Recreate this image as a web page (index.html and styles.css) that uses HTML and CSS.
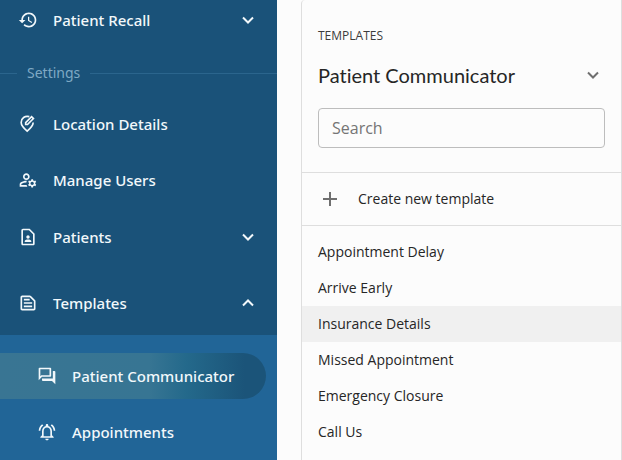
FILE: index.html
```html
<!DOCTYPE html>
<html lang="en">

<head>
    <meta charset="UTF-8">
    <meta name="viewport" content="width=device-width, initial-scale=1">
    <title>Templates</title>
    <link rel="stylesheet" href="styles.css">
</head>

<body>

    <div class="app">
        <nav class="sidebar">
            <button class="sidebar__item sidebar__item--top" type="button" aria-expanded="false">
                <svg class="icon" viewBox="0 0 24 24"><path d="M13 3c-4.97 0-9 4.03-9 9H1l3.89 3.89.07.14L9 12H6c0-3.87 3.13-7 7-7s7 3.13 7 7-3.13 7-7 7c-1.93 0-3.68-.79-4.94-2.06l-1.42 1.42C8.27 19.99 10.51 21 13 21c4.97 0 9-4.03 9-9s-4.03-9-9-9zm-1 5v5l4.28 2.54.72-1.21-3.5-2.08V8H12z"/></svg>
                <span class="sidebar__label">Patient Recall</span>
                <svg class="chevron" viewBox="0 0 24 24"><path d="M7 9.5l5 5 5-5"/></svg>
            </button>

            <div class="sidebar__divider">Settings</div>

            <a class="sidebar__item" href="#">
                <svg class="icon" viewBox="0 0 24 24">
                    <path class="icon__line" d="M13.6 3.2C8.4 1.6 3.8 5.2 3.8 10.2c0 3 2.3 6.2 7.2 10.4 4.9-4.2 7.2-7.4 7.2-10.4"/>
                    <path class="icon__line" d="M9.2 12.6V10.4l7.1-7.1 2.2 2.2-7.1 7.1z"/>
                </svg>
                <span class="sidebar__label">Location Details</span>
            </a>
            <a class="sidebar__item" href="#">
                <svg class="icon" viewBox="0 0 24 24"><path d="M4 18v-.65c0-.34.16-.66.41-.81C6.1 15.53 8.03 15 10 15c.03 0 .05 0 .08.01.1-.7.3-1.37.59-1.98-.22-.02-.44-.03-.67-.03-2.42 0-4.68.67-6.61 1.82-.88.52-1.39 1.5-1.39 2.53V20h9.26c-.42-.6-.75-1.28-.97-2H4zM10 12c2.21 0 4-1.79 4-4s-1.79-4-4-4C7.79 4 6 5.79 6 8s1.79 4 4 4zm0-6c1.1 0 2 .9 2 2s-.9 2-2 2-2-.9-2-2 .9-2 2-2zM20.75 16c0-.22-.03-.42-.06-.63l1.14-1.01-1-1.73-1.45.49c-.32-.27-.68-.48-1.08-.63L18 11h-2l-.3 1.49c-.4.15-.76.36-1.08.63l-1.45-.49-1 1.73 1.14 1.01c-.03.21-.06.41-.06.63s.03.42.06.63l-1.14 1.01 1 1.73 1.45-.49c.32.27.68.48 1.08.63L16 21h2l.3-1.49c.4-.15.76-.36 1.08-.63l1.45.49 1-1.73-1.14-1.01c.03-.21.06-.41.06-.63zM17 18c-1.1 0-2-.9-2-2s.9-2 2-2 2 .9 2 2-.9 2-2 2z"/></svg>
                <span class="sidebar__label">Manage Users</span>
            </a>
            <button class="sidebar__item sidebar__item--group" type="button" aria-expanded="false">
                <svg class="icon" viewBox="0 0 24 24"><path d="M13.17 4L18 8.83V20H6V4h7.17M14 2H6c-1.1 0-2 .9-2 2v16c0 1.1.9 2 2 2h12c1.1 0 2-.9 2-2V8l-6-6zm-2 12c1.1 0 2-.9 2-2s-.9-2-2-2-2 .9-2 2 .9 2 2 2zm4 3.43c0-.81-.48-1.53-1.22-1.85-.85-.37-1.79-.58-2.78-.58s-1.93.21-2.78.58C8.48 15.9 8 16.62 8 17.43V18h8v-.57z"/></svg>
                <span class="sidebar__label">Patients</span>
                <svg class="chevron" viewBox="0 0 24 24"><path d="M7 9.5l5 5 5-5"/></svg>
            </button>
            <button class="sidebar__item sidebar__item--group sidebar__item--open" type="button" aria-expanded="true">
                <svg class="icon" viewBox="0 0 24 24"><path d="M14.17 5L19 9.83V19H5V5h9.17m0-2H5c-1.1 0-2 .9-2 2v14c0 1.1.9 2 2 2h14c1.1 0 2-.9 2-2V9.83c0-.53-.21-1.04-.59-1.41l-4.83-4.83c-.37-.38-.88-.59-1.41-.59zM7 15h10v2H7v-2zm0-4h10v2H7v-2zm0-4h7v2H7V7z"/></svg>
                <span class="sidebar__label">Templates</span>
                <svg class="chevron" viewBox="0 0 24 24"><path d="M7 14.5l5-5 5 5"/></svg>
            </button>

            <div class="submenu">
                <a class="submenu__item submenu__item--active" href="#" aria-current="page">
                    <svg class="icon" viewBox="0 0 24 24"><path d="M15 4v7H5.17L4 12.17V4h11m1-2H3c-.55 0-1 .45-1 1v14l4-4h10c.55 0 1-.45 1-1V3c0-.55-.45-1-1-1zm5 4h-2v9H6v2c0 .55.45 1 1 1h11l4 4V7c0-.55-.45-1-1-1z"/></svg>
                    <span class="sidebar__label">Patient Communicator</span>
                </a>
                <a class="submenu__item" href="#">
                    <svg class="icon" viewBox="0 0 24 24"><path d="M12 22c1.1 0 2-.9 2-2h-4c0 1.1.9 2 2 2zm6-6v-5c0-3.07-1.63-5.64-4.5-6.32V4c0-.83-.67-1.5-1.5-1.5s-1.5.67-1.5 1.5v.68C7.64 5.36 6 7.92 6 11v5l-2 2v1h16v-1l-2-2zm-2 1H8v-6c0-2.48 1.51-4.5 4-4.5s4 2.02 4 4.5v6zM7.58 4.08L6.15 2.65C3.75 4.48 2.17 7.3 2.03 10.5h2c.15-2.65 1.51-4.97 3.55-6.42zm12.39 6.42h2c-.15-3.2-1.73-6.02-4.12-7.85l-1.42 1.43c2.02 1.45 3.39 3.77 3.54 6.42z"/></svg>
                    <span class="sidebar__label">Appointments</span>
                </a>
            </div>
        </nav>

        <main class="panel">
            <div class="panel__header">
                <div class="panel__caption">TEMPLATES</div>
                <button class="panel__title" type="button">
                    <span>Patient Communicator</span>
                    <svg class="chevron chevron--grey" viewBox="0 0 24 24"><path d="M7 9.5l5 5 5-5"/></svg>
                </button>
                <input class="panel__search" type="text" placeholder="Search" aria-label="Search">
            </div>

            <button class="panel__create" type="button">
                <svg class="plus" viewBox="0 0 24 24"><path d="M12 5v14M5 12h14"/></svg>
                <span>Create new template</span>
            </button>

            <ul class="list">
                <li><a class="list__item" href="#">Appointment Delay</a></li>
                <li><a class="list__item" href="#">Arrive Early</a></li>
                <li><a class="list__item list__item--selected" href="#">Insurance Details</a></li>
                <li><a class="list__item" href="#">Missed Appointment</a></li>
                <li><a class="list__item" href="#">Emergency Closure</a></li>
                <li><a class="list__item" href="#">Call Us</a></li>
            </ul>
        </main>
    </div>

</body>

</html>
```
FILE: styles.css
```css
* {
    box-sizing: border-box;
    padding: 0;
    margin: 0;
}

body {
    background-color: #fcfcfc;
    color: #262626;
    font-family: "Open Sans", "Noto Sans", sans-serif;
    font-size: 14px;
    line-height: 20px;
}

button,
input {
    font: inherit;
    color: inherit;
    background: none;
    border: none;
    text-align: left;
}

a {
    color: inherit;
    text-decoration: none;
}

.app {
    display: flex;
    min-height: 100vh;
}

/* Sidebar */
.sidebar {
    display: flex;
    flex-direction: column;
    flex: 0 0 277px;
    background-color: #1a5279;
    color: #f2f8fb;
    font-family: "Noto Sans", "Open Sans", sans-serif;
    font-size: 15px;
    font-weight: 500;
}

.sidebar__item {
    display: flex;
    align-items: center;
    gap: 15px;
    width: 100%;
    height: 56px;
    padding: 0 17px 0 18px;
}

.sidebar__item--top {
    height: 40px;
}

.sidebar__item--group {
    height: 58px;
    margin-bottom: 8px;
}

.sidebar__item--open {
    margin-bottom: 3px;
}

.sidebar__label {
    flex: 1;
}

.sidebar__divider {
    display: flex;
    align-items: center;
    gap: 10px;
    margin: 23px 0 13px;
    color: #7fa9c4;
    font-size: 14px;
    font-weight: 400;
}

.sidebar__divider::before,
.sidebar__divider::after {
    content: "";
    height: 1px;
    background-color: #2b658d;
}

.sidebar__divider::before {
    width: 17px;
}

.sidebar__divider::after {
    flex: 1;
}

.icon {
    flex: none;
    width: 20px;
    height: 20px;
    fill: currentColor;
}

.icon__line {
    fill: none;
    stroke: currentColor;
    stroke-width: 2;
}

.chevron {
    flex: none;
    width: 24px;
    height: 24px;
    fill: none;
    stroke: currentColor;
    stroke-width: 2;
}

.chevron--grey {
    color: #6f6f6f;
}

.submenu {
    flex: 1;
    padding: 18px 11px 0 0;
    background-color: #216597;
}

.submenu__item {
    display: flex;
    align-items: center;
    gap: 15px;
    height: 46px;
    margin-bottom: 10px;
    padding-left: 37px;
    border-radius: 0 23px 23px 0;
}

.submenu__item--active {
    background: linear-gradient(90deg, #397593 0%, #377593 56%, #24698b 70%, #1b5479 92%);
}

/* Templates panel */
.panel {
    flex: 1;
    min-width: 0;
    margin-left: 24px;
    border: 1px solid #dedede;
    border-width: 0 1px;
    border-top-left-radius: 4px;
}

.panel__header {
    padding: 26px 16px 24px;
    border-bottom: 1px solid #dedede;
}

.panel__caption {
    color: #3c3c3c;
    font-size: 12px;
}

.panel__title {
    display: flex;
    align-items: center;
    justify-content: space-between;
    width: 100%;
    margin: 14px 0 18px;
    font-family: Lato, sans-serif;
    font-size: 20px;
    font-variant-ligatures: none;
    line-height: 30px;
}

.panel__search {
    display: block;
    width: 100%;
    height: 40px;
    padding: 0 13px;
    border: 1px solid #bdbdbd;
    border-radius: 4px;
    font-size: 16px;
}

.panel__search::placeholder {
    color: #757575;
    opacity: 1;
}

.panel__create {
    display: flex;
    align-items: center;
    gap: 16px;
    width: 100%;
    height: 53px;
    padding: 0 16px;
    border-bottom: 1px solid #dedede;
}

.plus {
    width: 24px;
    height: 24px;
    fill: none;
    stroke: #6f6f6f;
    stroke-width: 2;
}

.list {
    padding: 8px 0;
    list-style: none;
}

.list__item {
    display: block;
    padding: 8px 16px;
}

.list__item--selected {
    background-color: #f0f0f0;
}
```
